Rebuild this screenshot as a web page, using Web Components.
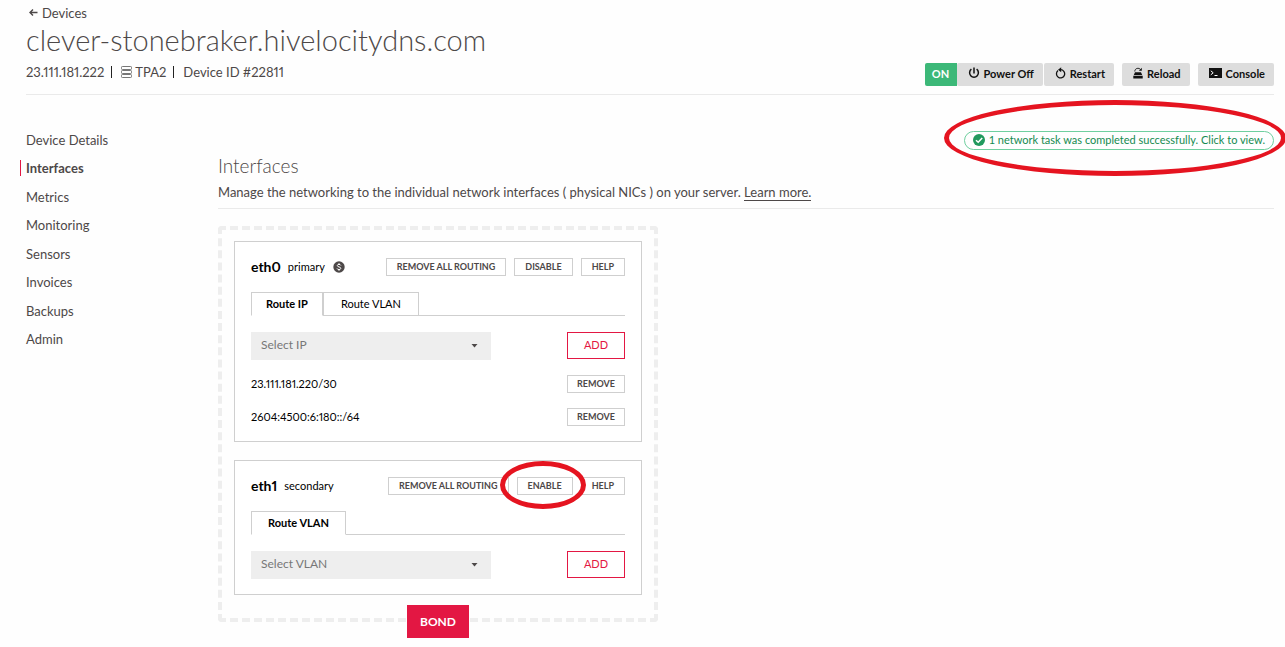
<!DOCTYPE html>
<html lang="en">
<head>
<meta charset="utf-8">
<title>clever-stonebraker.hivelocitydns.com</title>
<style>
    :root {
        --text: #4d4848;
        --red: #e31743;
        --line: #eaeaea;
        --border: #cfcfcf;
        --ring: #e51420;
    }
    body {
        margin: 0;
        background: #fefefe;
        color: var(--text);
        font-family: Lato, "Liberation Sans", sans-serif;
        font-size: 13px;
        line-height: 20px;
        font-variant-numeric: proportional-nums;
        overflow-x: hidden;
    }
</style>
</head>
<body>
<device-page>
    <device-header slot="header" name="clever-stonebraker.hivelocitydns.com" ip="23.111.181.222" facility="TPA2" device-id="22811"></device-header>
    <side-nav slot="nav" active="Interfaces"></side-nav>
    <task-alert slot="alert">1 network task was completed successfully. Click to view.</task-alert>
    <section-heading heading="Interfaces">
        Manage the networking to the individual network interfaces ( physical NICs ) on your server. <a href="#learn">Learn more.</a>
    </section-heading>
    <bond-group>
        <interface-card name="eth0" role-name="primary" billed>
            <outline-button slot="actions">REMOVE ALL ROUTING</outline-button>
            <outline-button slot="actions">DISABLE</outline-button>
            <outline-button slot="actions">HELP</outline-button>
            <tab-strip slot="tabs" tabs="Route IP,Route VLAN"></tab-strip>
            <route-form label="Select IP"></route-form>
            <route-row>23.111.181.220/30</route-row>
            <route-row>2604:4500:6:180::/64</route-row>
        </interface-card>
        <interface-card name="eth1" role-name="secondary">
            <outline-button slot="actions">REMOVE ALL ROUTING</outline-button>
            <outline-button slot="actions" ringed>ENABLE</outline-button>
            <outline-button slot="actions">HELP</outline-button>
            <tab-strip slot="tabs" tabs="Route VLAN"></tab-strip>
            <route-form label="Select VLAN"></route-form>
        </interface-card>
    </bond-group>
</device-page>

<script>
/** Attach an open shadow root holding the given markup */
function shadow(el, html) {
    el.attachShadow({ mode: 'open' }).innerHTML = html;
}

const ICONS = {
    back: '<svg width="9" height="9" viewBox="0 0 9 9" fill="none" stroke="currentColor" stroke-width="1.4"><path d="M8.5 4.5H1M4 1.5L1 4.5l3 3"/></svg>',
    rack: '<svg width="11" height="12" viewBox="0 0 11 12" fill="none" stroke="#777"><rect x=".5" y=".5" width="10" height="3" rx=".8"/><rect x=".5" y="4.5" width="10" height="3" rx=".8"/><rect x=".5" y="8.5" width="10" height="3" rx=".8"/></svg>',
    power: '<svg width="12" height="12" viewBox="0 0 12 12" fill="none" stroke="currentColor" stroke-width="1.5"><path d="M6 .5v6M3.4 2.2a4.4 4.4 0 1 0 5.2 0"/></svg>',
    restart: '<svg width="11" height="12" viewBox="0 0 11 12"><path d="M3 3.600a4.100 4.100 0 1 0 2.500-.9" fill="none" stroke="currentColor" stroke-width="1.300"/><path d="M6.200.2v5L3 2.700z" fill="currentColor"/></svg>',
    reload: '<svg width="10" height="12" viewBox="0 0 10 12"><path d="M1.800 4.500C1.800 1 6 .4 7.600 2.600" fill="none" stroke="currentColor" stroke-width=".9"/><path d="M8.800.8v3H5.800zM2 5.200h6L9.200 8H.8zM.3 8.800h9.400v2.700H.3z" fill="currentColor"/></svg>',
    console: '<svg width="13" height="10" viewBox="0 0 13 10"><path d="M0 0h13v10H0z" fill="#111"/><path d="M1.800 2.800l2.400 2-2.400 2M5.500 7.500h3" fill="none" stroke="#fff"/></svg>',
    check: '<svg width="12" height="12" viewBox="0 0 12 12"><circle cx="6" cy="6" r="6" fill="#21995d"/><path d="M3 6.200l2.200 2.100L9.200 4" fill="none" stroke="#fff" stroke-width="1.500"/></svg>',
    dollar: '<svg width="12" height="12" viewBox="0 0 12 12"><circle cx="6" cy="6" r="5.700" fill="#4d4848"/><path d="M7.900 4.500C7.500 3 4.300 3 4.300 4.600c0 1.700 3.500 1 3.500 2.700C7.800 9 4.400 9 4 7.400M6 2.200v1.300M6 8.500v1.300" fill="none" stroke="#fff"/></svg>'
};

class DevicePage extends HTMLElement {
    connectedCallback() {
        shadow(this, `
            <style>
                :host { display: block; padding: 2px 11px 8px 26px; }
                .columns { display: grid; grid-template-columns: 192px 1fr; margin-top: 31px; }
                main { display: flex; flex-direction: column; }
                .alert { display: flex; justify-content: flex-end; margin-top: 5px; }
            </style>
            <slot name="header"></slot>
            <div class="columns">
                <slot name="nav"></slot>
                <main>
                    <div class="alert"><slot name="alert"></slot></div>
                    <slot></slot>
                </main>
            </div>
        `);
    }
}

class DeviceHeader extends HTMLElement {
    connectedCallback() {
        shadow(this, `
            <style>
                :host { display: block; border-bottom: 1px solid var(--line); padding-bottom: 8px; }
                .back { display: inline-flex; align-items: center; gap: 4px; margin-left: 3px; color: inherit; text-decoration: none; }
                h1 { margin: 0; font-size: 29px; line-height: 34px; font-weight: 300; }
                .bar { display: flex; justify-content: space-between; align-items: flex-start; }
                .meta { display: flex; margin-top: 5px; }
                .meta span { display: flex; align-items: center; gap: 3px; }
                .meta span + span::before { content: ""; width: 1px; height: 12px; background: #222; margin: 0 6px 0 7px; }
                .actions { display: flex; gap: 8px; margin-top: 6px; }
                .group { display: flex; gap: 1px; }
                .power { display: flex; }
                .on, button { box-sizing: border-box; height: 23px; padding-bottom: 2px; font: bold 11px/21px Lato, "Liberation Sans", sans-serif; }
                .on { width: 32px; text-align: center; color: #fff; background: #3cb878; border-radius: 2px 0 0 2px; }
                button { display: flex; align-items: center; gap: 4px; padding: 0 9px 2px 11px; border: 0; border-radius: 2px; background: #ddd; color: #111; }
            </style>
            <a class="back" href="#devices">${ICONS.back}Devices</a>
            <h1>${this.getAttribute('name')}</h1>
            <div class="bar">
                <div class="meta">
                    <span>${this.getAttribute('ip')}</span>
                    <span>${ICONS.rack}${this.getAttribute('facility')}</span>
                    <span>Device ID #${this.getAttribute('device-id')}</span>
                </div>
                <div class="actions">
                    <div class="group">
                        <div class="power"><span class="on">ON</span><button>${ICONS.power}Power Off</button></div>
                        <button>${ICONS.restart}Restart</button>
                    </div>
                    <button>${ICONS.reload}Reload</button>
                    <button>${ICONS.console}Console</button>
                </div>
            </div>
        `);
    }
}

class SideNav extends HTMLElement {
    connectedCallback() {
        const items = ['Device Details', 'Interfaces', 'Metrics', 'Monitoring', 'Sensors', 'Invoices', 'Backups', 'Admin'];
        const active = this.getAttribute('active');
        shadow(this, `
            <style>
                :host { display: block; }
                nav { display: grid; grid-auto-rows: 1fr; align-items: center; min-height: 228px; }
                a { color: inherit; text-decoration: none; line-height: 16px; }
                a.active { font-weight: bold; margin-left: -6px; padding-left: 5px; border-left: 1px solid var(--red); }
            </style>
            <nav>
                ${items.map(item => `<a href="#${item.toLowerCase().replace(' ', '-')}"${item === active ? ' class="active"' : ''}>${item}</a>`).join('')}
            </nav>
        `);
    }
}

class TaskAlert extends HTMLElement {
    connectedCallback() {
        shadow(this, `
            <style>
                :host { display: block; position: relative; }
                button { display: flex; align-items: center; gap: 4px; height: 19px; padding: 0 8px 1px; border: 1px solid #6fcf9f; border-radius: 10px; background: none; color: #158a50; font: 11px/16px Lato, "Liberation Sans", sans-serif; }
                .ring { position: absolute; top: -31px; left: -20px; width: calc(100% + 32px); height: 76px; box-sizing: border-box; border: 5px solid var(--ring); border-radius: 50%; pointer-events: none; }
            </style>
            <button>${ICONS.check}<slot></slot></button>
            <div class="ring"></div>
        `);
    }
}

class SectionHeading extends HTMLElement {
    connectedCallback() {
        shadow(this, `
            <style>
                :host { display: block; padding-bottom: 6px; margin-top: 2px; border-bottom: 1px solid var(--line); }
                h2 { margin: 0; font-size: 19px; line-height: 28px; font-weight: 300; }
                p { margin: 2px 0 0; }
                ::slotted(a) { color: inherit; text-decoration: none; border-bottom: 1px solid var(--text); }
            </style>
            <h2>${this.getAttribute('heading')}</h2>
            <p><slot></slot></p>
        `);
    }
}

class BondGroup extends HTMLElement {
    connectedCallback() {
        shadow(this, `
            <style>
                :host { display: block; max-width: 440px; margin-top: 17px; }
                .frame { display: flex; flex-direction: column; gap: 18px; padding: 11px 12px 23px; border: 4px dashed #eee; border-radius: 4px; }
                button { display: block; margin: -17px auto 0; height: 33px; padding: 0 13px; border: 0; background: var(--red); color: #fff; font: bold 12px/33px Lato, "Liberation Sans", sans-serif; position: relative; }
            </style>
            <div class="frame"><slot></slot></div>
            <button>BOND</button>
        `);
    }
}

class InterfaceCard extends HTMLElement {
    connectedCallback() {
        shadow(this, `
            <style>
                :host { display: block; padding: 16px 16px 15px; border: 1px solid var(--border); background: #fff; color: #000; font-size: 11px; }
                header { display: flex; justify-content: space-between; align-items: center; height: 18px; margin-bottom: 16px; }
                h3 { display: flex; align-items: center; margin: 0; font-size: 14px; line-height: 18px; }
                small { margin: 0 8px 0 7px; font-size: 11px; font-weight: normal; }
                .actions { display: flex; gap: 8px; }
            </style>
            <header>
                <h3>${this.getAttribute('name')}<small>${this.getAttribute('role-name')}</small>${this.hasAttribute('billed') ? ICONS.dollar : ''}</h3>
                <div class="actions"><slot name="actions"></slot></div>
            </header>
            <slot name="tabs"></slot>
            <slot></slot>
        `);
    }
}

class OutlineButton extends HTMLElement {
    connectedCallback() {
        shadow(this, `
            <style>
                :host { display: block; position: relative; }
                button { display: block; height: 18px; padding: 0 var(--button-pad, 10px) 1px; border: 1px solid var(--border); background: #fff; color: var(--text); font: bold 9px/15px Lato, "Liberation Sans", sans-serif; white-space: nowrap; }
                .ring { position: absolute; inset: -16px -13px -14px -17px; border: 5px solid var(--ring); border-radius: 50%; z-index: 1; pointer-events: none; }
            </style>
            <button><slot></slot></button>
            ${this.hasAttribute('ringed') ? '<div class="ring"></div>' : ''}
        `);
    }
}

class TabStrip extends HTMLElement {
    connectedCallback() {
        const tabs = this.getAttribute('tabs').split(',');
        shadow(this, `
            <style>
                :host { display: block; }
                div { display: flex; }
                div::after { content: ""; flex: 1; border-bottom: 1px solid var(--border); }
                button { height: 24px; padding: 0 17px; border: 1px solid var(--border); background: #fff; color: #000; font: 11px/22px Lato, "Liberation Sans", sans-serif; }
                button[aria-selected="true"] { padding: 0 14px; font-weight: bold; border-bottom-color: #fff; }
                button:only-child { padding: 0 16px; }
            </style>
            <div role="tablist">
                ${tabs.map((tab, i) => `<button role="tab" aria-selected="${i === 0}">${tab}</button>`).join('')}
            </div>
        `);
    }
}

class RouteForm extends HTMLElement {
    connectedCallback() {
        const label = this.getAttribute('label');
        shadow(this, `
            <style>
                :host { display: flex; justify-content: space-between; margin-top: 16px; }
                .select { display: grid; align-items: center; width: 240px; }
                select, svg { grid-area: 1 / 1; }
                select { appearance: none; height: 28px; padding: 0 10px 2px; border: 0; border-radius: 0; background: #eee; color: #777; font: 12px/20px Lato, "Liberation Sans", sans-serif; }
                svg { justify-self: end; margin-right: 13px; pointer-events: none; }
                button { width: 58px; height: 27px; padding: 0 0 2px; border: 1px solid var(--red); background: #fff; color: var(--red); font: 11px/23px Lato, "Liberation Sans", sans-serif; }
            </style>
            <div class="select">
                <select aria-label="${label}"><option>${label}</option></select>
                <svg width="7" height="4" viewBox="0 0 7 4"><path d="M.5 0h6L3.500 3.500z" fill="#4d4848"/></svg>
            </div>
            <button>ADD</button>
        `);
    }
}

class RouteRow extends HTMLElement {
    connectedCallback() {
        shadow(this, `
            <style>
                :host { display: flex; justify-content: space-between; align-items: center; margin-top: 15px; line-height: 18px; }
                outline-button { --button-pad: 9px; }
            </style>
            <span><slot></slot></span>
            <outline-button>REMOVE</outline-button>
        `);
    }
}

customElements.define('device-page', DevicePage);
customElements.define('device-header', DeviceHeader);
customElements.define('side-nav', SideNav);
customElements.define('task-alert', TaskAlert);
customElements.define('section-heading', SectionHeading);
customElements.define('bond-group', BondGroup);
customElements.define('interface-card', InterfaceCard);
customElements.define('outline-button', OutlineButton);
customElements.define('tab-strip', TabStrip);
customElements.define('route-form', RouteForm);
customElements.define('route-row', RouteRow);
</script>
</body>
</html>
